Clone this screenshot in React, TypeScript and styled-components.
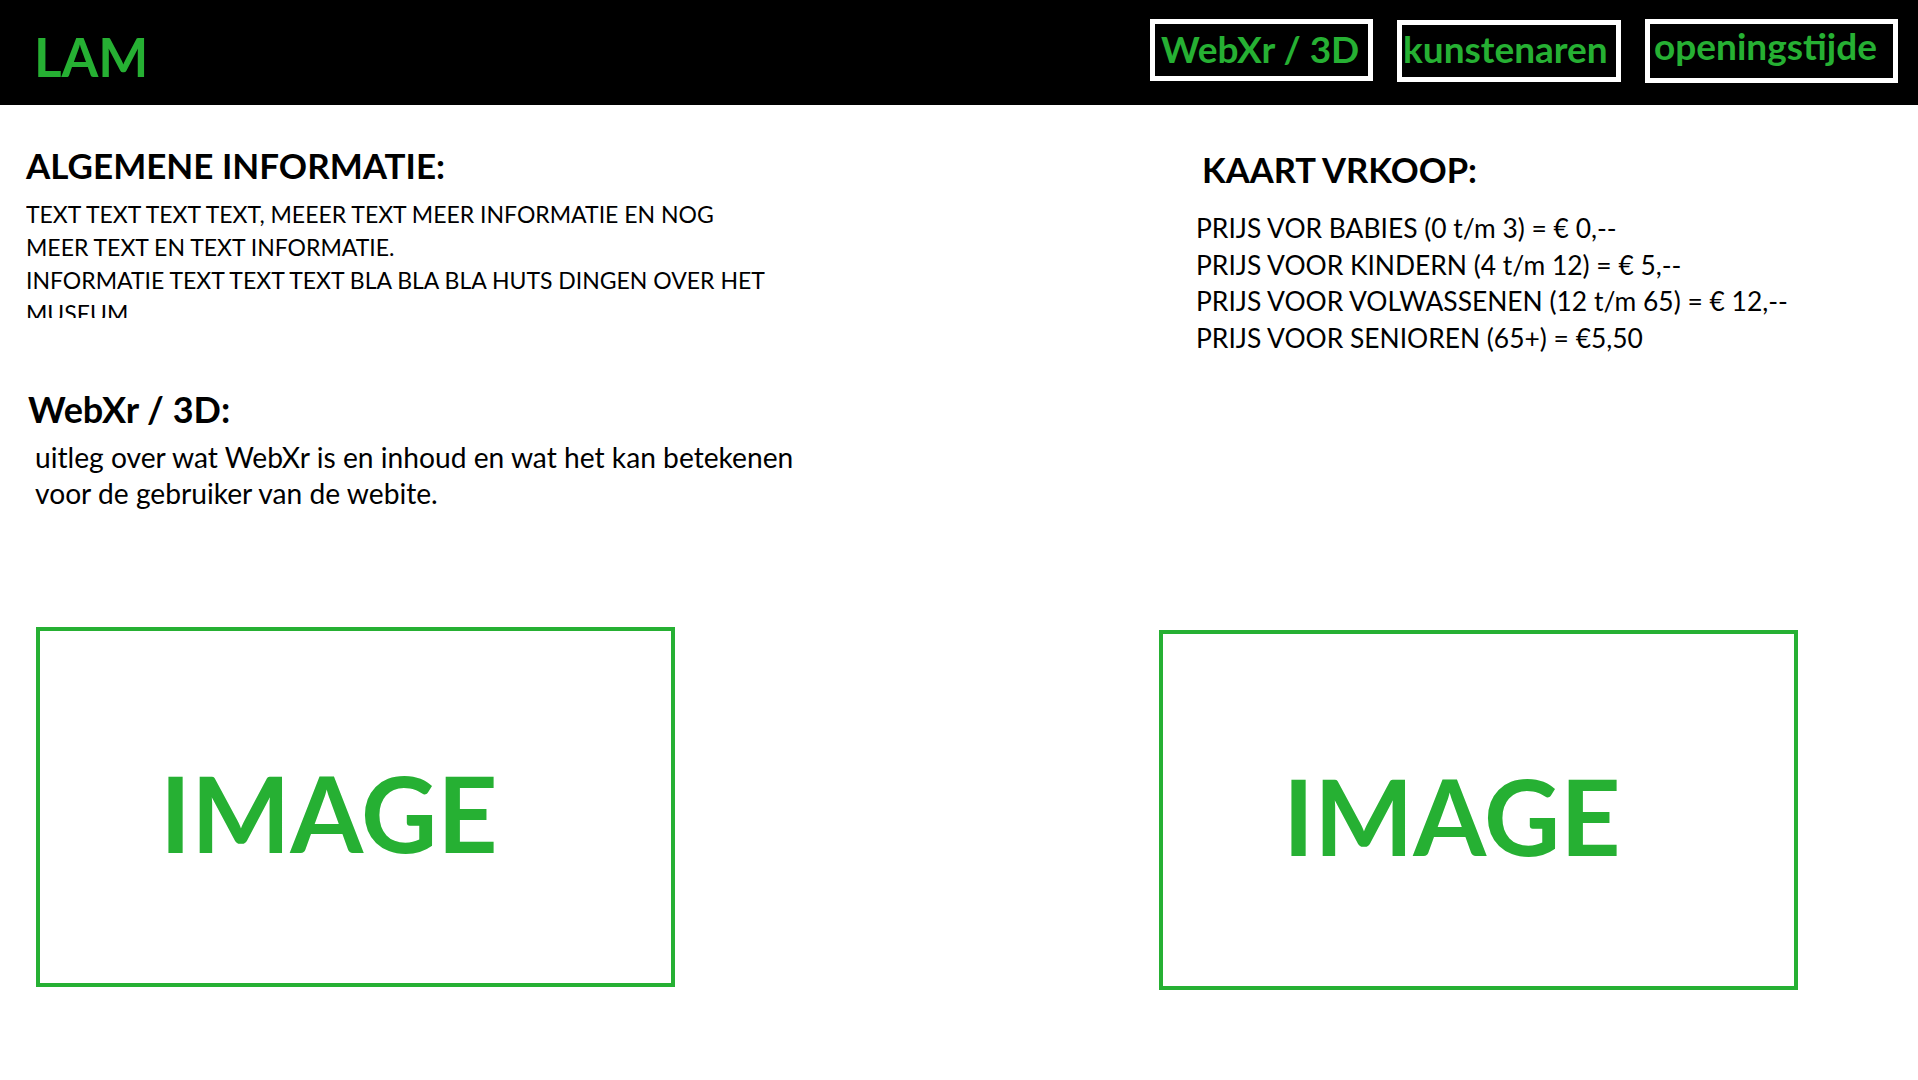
import React from "react";
import styled, { createGlobalStyle } from "styled-components";

const GREEN = "#26b033";

const GlobalStyle = createGlobalStyle`
  html, body {
    margin: 0;
    padding: 0;
    background: #ffffff;
  }
  body {
    font-family: Lato, "Open Sans", "Liberation Sans", sans-serif;
    color: #000;
    overflow: hidden;
  }
  * { box-sizing: border-box; }
`;

const Page = styled.div`
  width: 1918px;
  min-height: 1080px;
  background: #fff;
`;

const Header = styled.header`
  display: flex;
  align-items: flex-start;
  height: 105px;
  background: #000;
  padding: 0 20px 0 34px;
`;

const Logo = styled.div`
  margin-top: 30px;
  font-size: 53px;
  line-height: 53px;
  font-weight: 700;
  color: ${GREEN};
`;

const Nav = styled.nav`
  display: flex;
  align-items: flex-start;
  margin-left: auto;
  gap: 24px;
`;

const NavButton = styled.a<{ $w: number; $h: number; $top: number; $pl: number; $pt: number }>`
  display: flex;
  align-items: flex-start;
  width: ${(p) => p.$w}px;
  height: ${(p) => p.$h}px;
  margin-top: ${(p) => p.$top}px;
  padding: ${(p) => p.$pt}px 0 0 ${(p) => p.$pl}px;
  border: 5px solid #fff;
  background: #000;
  color: ${GREEN};
  font-size: 37px;
  line-height: 37px;
  font-weight: 700;
  text-decoration: none;
  white-space: nowrap;
`;

const Content = styled.main`
  display: grid;
  grid-template-columns: 1150px 1fr;
`;

const Column = styled.section<{ $pl: number; $pt: number }>`
  display: flex;
  flex-direction: column;
  align-items: flex-start;
  padding: ${(p) => p.$pt}px 0 0 ${(p) => p.$pl}px;
`;

const Heading = styled.h2<{ $mt?: number; $ml?: number; $size?: number }>`
  margin: ${(p) => p.$mt ?? 0}px 0 0 ${(p) => p.$ml ?? 0}px;
  font-size: ${(p) => p.$size ?? 35}px;
  line-height: 40px;
  font-weight: 700;
  color: #000;
  white-space: nowrap;
`;

const InfoText = styled.p`
  margin: 13px 0 0 0;
  width: 760px;
  max-height: 120px;
  overflow: hidden;
  font-size: 23px;
  line-height: 33px;
  font-weight: 400;
  white-space: nowrap;
`;

const Explain = styled.p`
  margin: 10px 0 0 9px;
  width: 820px;
  font-size: 28.2px;
  line-height: 36px;
  font-weight: 400;
  white-space: nowrap;
`;

const PriceList = styled.ul`
  list-style: none;
  margin: 20px 0 0 0;
  padding: 0;
`;

const PriceItem = styled.li`
  font-size: 26.4px;
  line-height: 36.7px;
  white-space: nowrap;
`;

const Gallery = styled.div`
  display: flex;
  align-items: flex-start;
  gap: 484px;
  padding: 116px 0 0 36px;
`;

const ImageBox = styled.div<{ $mt?: number }>`
  display: flex;
  align-items: center;
  width: 639px;
  height: 360px;
  margin-top: ${(p) => p.$mt ?? 0}px;
  padding: 10px 0 0 120px;
  border: 4px solid ${GREEN};
  color: ${GREEN};
  font-size: 105px;
  font-weight: 700;
  line-height: 1;
`;

const prices = [
  "PRIJS VOR BABIES (0 t/m 3) = € 0,--",
  "PRIJS VOOR KINDERN (4 t/m 12) = € 5,--",
  "PRIJS VOOR VOLWASSENEN (12 t/m 65) = € 12,--",
  "PRIJS VOOR SENIOREN (65+) = €5,50",
];

export default function App() {
  return (
    <Page>
      <GlobalStyle />
      <Header>
        <Logo>LAM</Logo>
        <Nav>
          <NavButton href="#" $w={223} $h={62} $top={19} $pl={6} $pt={6}>
            WebXr / 3D
          </NavButton>
          <NavButton href="#" $w={224} $h={62} $top={20} $pl={1} $pt={5}>
            kunstenaren
          </NavButton>
          <NavButton href="#" $w={253} $h={64} $top={19} $pl={4} $pt={3}>
            openingstijde
          </NavButton>
        </Nav>
      </Header>
      <Content>
        <Column $pl={26} $pt={40}>
          <Heading>ALGEMENE INFORMATIE:</Heading>
          <InfoText>
            TEXT TEXT TEXT TEXT, MEEER TEXT MEER INFORMATIE EN NOG
            <br />
            MEER TEXT EN TEXT INFORMATIE.
            <br />
            INFORMATIE TEXT TEXT TEXT BLA BLA BLA HUTS DINGEN OVER HET
            <br />
            MUSEUM
          </InfoText>
          <Heading $mt={71} $ml={2} $size={36}>WebXr / 3D:</Heading>
          <Explain>
            uitleg over wat WebXr is en inhoud en wat het kan betekenen
            <br />
            voor de gebruiker van de webite.
          </Explain>
        </Column>
        <Column $pl={46} $pt={45}>
          <Heading $ml={6} $size={34.6}>KAART VRKOOP:</Heading>
          <PriceList>
            {prices.map((p) => (
              <PriceItem key={p}>{p}</PriceItem>
            ))}
          </PriceList>
        </Column>
      </Content>
      <Gallery>
        <ImageBox>IMAGE</ImageBox>
        <ImageBox $mt={3}>IMAGE</ImageBox>
      </Gallery>
    </Page>
  );
}
